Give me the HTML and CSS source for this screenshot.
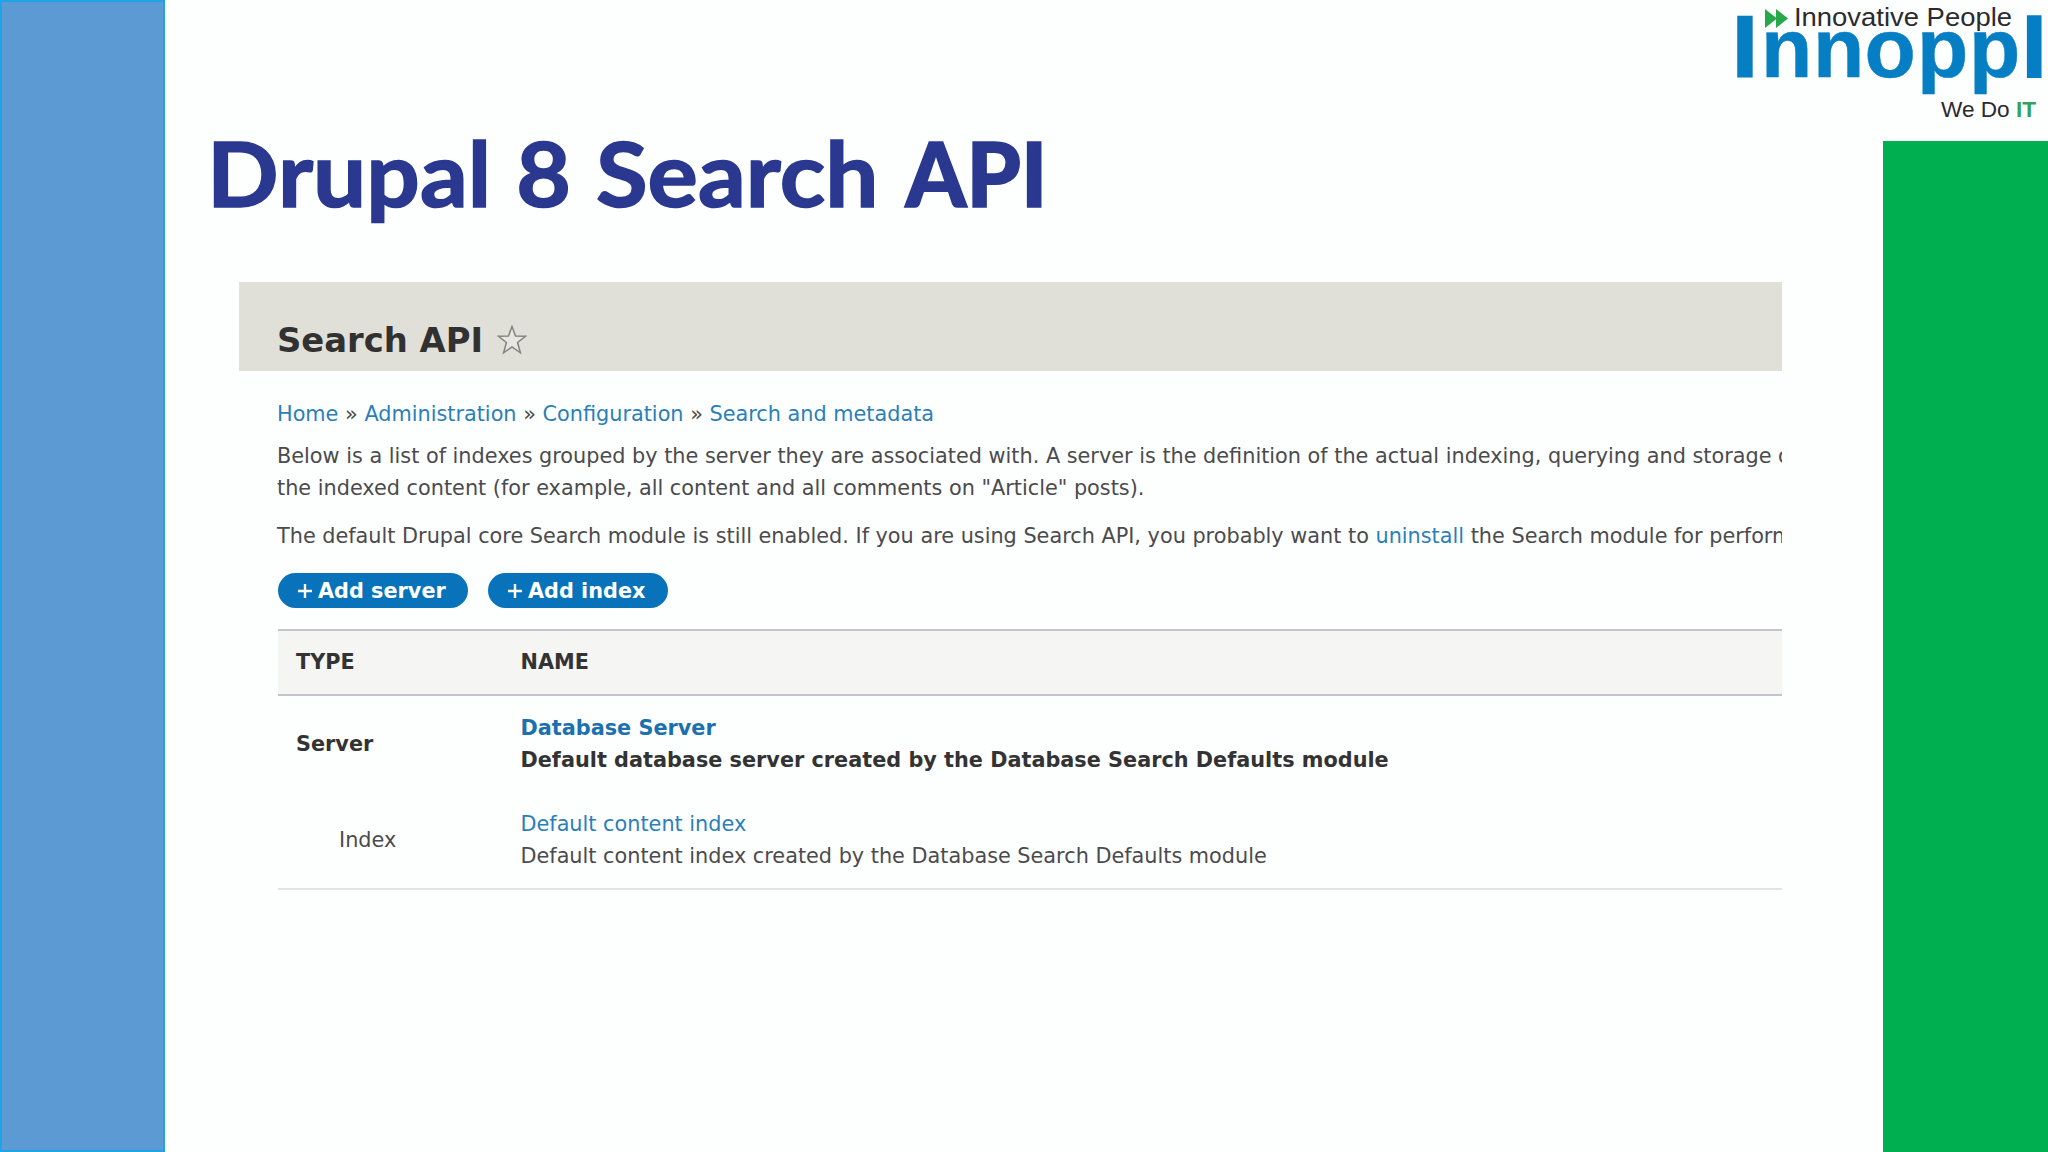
FILE: index.html
```html
<!DOCTYPE html>
<html lang="en">
<head>
<meta charset="utf-8">
<title>Drupal 8 Search API</title>
<link rel="stylesheet" href="styles.css">
</head>
<body>
<div class="slide">
  <aside class="bar-left"></aside>
  <main class="content">
    <h1 class="slide-title"><span>Drupal 8 Search <b>API</b></span></h1>
    <section class="panel">
      <header class="panel-head">
        <h2>Search API</h2>
        <svg class="star" viewBox="0 0 30 30"><path d="M15 1.5l3.5 9.4 10 .4-7.9 6.2 2.8 10.3L15 22l-8.4 5.800 2.800-10.300L1.500 11.300l10-.4z"/></svg>
      </header>
      <div class="panel-body">
        <nav class="crumbs"><a>Home</a> » <a>Administration</a> » <a>Configuration</a> » <a>Search and metadata</a></nav>
        <p class="intro">Below is a list of indexes grouped by the server they are associated with. A server is the definition of the actual indexing, querying and storage of<br>the indexed content (for example, all content and all comments on "Article" posts).</p>
        <p class="notice">The default Drupal core Search module is still enabled. If you are using Search API, you probably want to <a>uninstall</a> the Search module for performance</p>
        <div class="actions">
          <a class="btn btn-server"><svg viewBox="0 0 16 16"><path d="M8 1v14M1 8h14"/></svg>Add server</a>
          <a class="btn btn-index"><svg viewBox="0 0 16 16"><path d="M8 1v14M1 8h14"/></svg>Add index</a>
        </div>
        <div class="table">
          <div class="row head"><div class="type">TYPE</div><div class="name">NAME</div></div>
          <div class="row server"><div class="type">Server</div><div class="name"><a>Database Server</a><br>Default database server created by the Database Search Defaults module</div></div>
          <div class="row index"><div class="type">Index</div><div class="name"><a>Default content index</a><br>Default content index created by the Database Search Defaults module</div></div>
        </div>
      </div>
    </section>
  </main>
  <aside class="bar-right"></aside>
  <svg class="logo" viewBox="0 0 348 141">
    <text class="brand" y="77" x="33 61 113 164.500 217 269 323"><tspan class="cap" dy="-1.500">I</tspan><tspan dy="1.500">nnopp</tspan><tspan class="ell" dy="-1.500">l</tspan></text>
    <path class="arrows" d="M65 9l12 9.500-12 9.500zM76 9l12 9.500-12 9.500z"/>
    <text class="tagline" x="94" y="26" textLength="218" lengthAdjust="spacingAndGlyphs">Innovative People</text>
    <text class="motto" x="241" y="116.500" textLength="95" lengthAdjust="spacingAndGlyphs">We Do <tspan class="it">IT</tspan></text>
  </svg>
</div>
</body>
</html>
```
FILE: styles.css
```css
* { box-sizing: border-box; }
body { margin: 0; background: #fdfefe; }
.slide {
  position: relative;
  display: grid;
  grid-template-columns: 165px 1fr 165px;
  width: 2048px;
  height: 1152px;
  overflow: hidden;
}
.bar-left { background: #5b9ad3; border: 2px solid #1fa3e6; }
.bar-right { margin-top: 141px; background: #00b050; }
.logo { position: absolute; top: 0; right: 0; width: 348px; height: 141px; font-family: "Liberation Sans", Arial, sans-serif; }
.brand { font-size: 84px; font-weight: 700; fill: #067ec4; stroke: #067ec4; stroke-width: .5; }
.brand .cap { font-size: 86px; stroke-width: 3; }
.brand .ell { font-size: 81px; stroke-width: 3.500; }
.arrows { fill: #27a84a; }
.tagline { font-size: 25.500px; fill: #2b2a2e; }
.motto { font-size: 22.500px; fill: #2b2a2e; }
.it { font-weight: 700; fill: #33a35a; }

.content { padding-left: 74px; min-width: 0; }
.slide-title {
  margin: 0;
  height: 282px;
  padding-top: 118px;
  font: 700 89px/110px Lato, sans-serif;
  color: #2a3890;
  white-space: nowrap;
}
.slide-title span {
  display: inline-block;
  margin-left: -32px;
  transform: scaleX(1.06);
  transform-origin: 0 50%;
  word-spacing: 2px;
  -webkit-text-stroke: 1.500px #2a3890;
}
.slide-title b { display: inline-block; margin-left: 2px; transform: scaleX(.92); transform-origin: 0 50%; }

.panel { width: 1543px; overflow: hidden; font: 20.8px/32px "DejaVu Sans", sans-serif; color: #4b4b4d; }
.panel a { color: #2b7fb8; }
.panel-head { display: flex; align-items: flex-start; gap: 14px; height: 89px; padding: 39px 0 0 38px; background: #e0dfd8; }
.panel-head h2 { margin: 0; font-size: 33.800px; line-height: 40px; color: #313131; }
.star { width: 30px; height: 30px; margin-top: 4px; fill: #e8e6e0; stroke: #85837f; stroke-width: 1.500; }
.panel-body { padding: 27px 0 0 38px; white-space: nowrap; }
.crumbs { height: 42px; }
.intro { margin: 0 0 16px; }
.notice { margin: 0; }
.actions { display: flex; gap: 20px; margin: 21px 0 21px 1px; }
.panel .btn { display: flex; align-items: center; gap: 5px; height: 35px; padding: 1px 0 0 19px; border-radius: 18px; background: #0873ba; color: #fff; font-weight: 700; }
.btn svg { width: 16px; height: 16px; fill: none; stroke: #fff; stroke-width: 2.400; }
.btn-server { width: 190px; }
.btn-index { width: 180px; }
.table { margin-left: 1px; }
.row { display: grid; grid-template-columns: 224.500px 1fr; align-items: center; padding-left: 18px; }
.head { height: 67px; padding-bottom: 1px; background: #f5f5f3; border-top: 2px solid #c4c4c9; border-bottom: 2px solid #c4c4c9; font-weight: 700; color: #333; }
.server { height: 96px; font-weight: 700; color: #333; }
.server a { color: #1b70ad; }
.index { height: 98px; border-bottom: 2px solid #e2e2e7; }
.index .type { padding-left: 43px; }
```
